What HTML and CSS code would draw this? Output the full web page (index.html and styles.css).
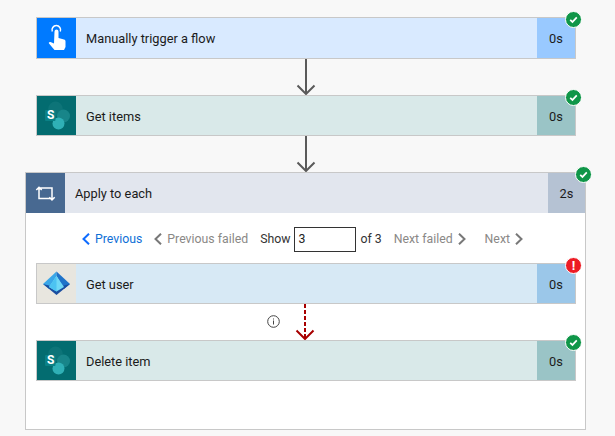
FILE: index.html
```html
<!DOCTYPE html>
<html>
<head>
  <title>Flow run</title>
  <link rel="stylesheet" href="styles.css">
</head>
<body>
  <svg class="sprites">
    <symbol id="sharepoint" viewBox="0 0 39 40">
      <circle cx="18.500" cy="12.800" r="7.300" fill="#0d7478"/>
      <circle cx="26.500" cy="20" r="6.500" fill="#188589"/>
      <circle cx="21.500" cy="27.500" r="6" fill="#2fb0b6"/>
      <rect x="8" y="14" width="10.500" height="11" rx="1" fill="#0a8186"/>
    </symbol>
    <symbol id="check" viewBox="0 0 16 16">
      <path d="M4.500 8.300l2.400 2.300 4.600-4.800" fill="none" stroke="#fff" stroke-width="1.800"/>
    </symbol>
    <symbol id="chev-left" viewBox="0 0 10 12">
      <path d="M8 .7L2.500 6 8 11.300" fill="none" stroke="currentColor" stroke-width="2"/>
    </symbol>
    <symbol id="chev-right" viewBox="0 0 10 12">
      <path d="M2 .7L7.500 6 2 11.300" fill="none" stroke="currentColor" stroke-width="2"/>
    </symbol>
    <symbol id="arrow" viewBox="0 0 20 36">
      <path d="M10 0v35M1.500 26.500L10 35l8.500-8.500" fill="none" stroke="#5a5a5a" stroke-width="2"/>
    </symbol>
  </svg>

  <div class="flow">
    <div class="card card-trigger">
      <div class="card-icon">
        <svg width="39" height="40" viewBox="0 0 39 40">
          <path d="M15.300 13.500a4.300 4.300 0 1 1 8 0" fill="none" stroke="#fff" stroke-width="1.500"/>
          <path d="M17.500 13.500a2 2 0 0 1 4 0v6.500l5.500 1.500c1 .3 1.500 1 1.500 2V29l-1.500 3h-9.500l-5.500-6.500c-.6-.8.300-2 1.500-1.500l3.500 1.500z" fill="#fff"/>
        </svg>
      </div>
      <div class="card-title">Manually trigger a flow</div>
      <div class="card-time">0s</div>
      <span class="badge badge-ok"><svg width="15" height="15"><use href="#check"/></svg></span>
    </div>

    <svg class="connector" width="20" height="36"><use href="#arrow"/></svg>

    <div class="card card-sp">
      <div class="card-icon">
        <svg width="39" height="40"><use href="#sharepoint"/></svg>
        <span class="sp-letter">S</span>
      </div>
      <div class="card-title">Get items</div>
      <div class="card-time">0s</div>
      <span class="badge badge-ok"><svg width="15" height="15"><use href="#check"/></svg></span>
    </div>

    <svg class="connector" width="20" height="36"><use href="#arrow"/></svg>

    <div class="loop">
      <div class="loop-head">
        <div class="card-icon">
          <svg width="39" height="40" viewBox="0 0 39 40" fill="none" stroke="#fff" stroke-width="1.500">
            <path d="M13 14.500V25.500H24M14 15H26V26.500M10.300 17L13 14.300 15.700 17M23.300 24.200L26 26.900l2.700-2.700"/>
          </svg>
        </div>
        <div class="card-title">Apply to each</div>
        <div class="card-time">2s</div>
        <span class="badge badge-ok"><svg width="15" height="15"><use href="#check"/></svg></span>
      </div>

      <div class="pager">
        <span class="pager-link active"><svg width="10" height="12"><use href="#chev-left"/></svg>Previous</span>
        <span class="pager-link prev-failed"><svg width="10" height="12"><use href="#chev-left"/></svg>Previous failed</span>
        <span class="pager-show">Show<input class="pager-input" type="text" value="3">of 3</span>
        <span class="pager-link next-failed">Next failed<svg width="10" height="12"><use href="#chev-right"/></svg></span>
        <span class="pager-link">Next<svg width="10" height="12"><use href="#chev-right"/></svg></span>
      </div>

      <div class="card card-user">
        <div class="card-icon">
          <svg width="39" height="40" viewBox="0 0 39 40">
            <path d="M19.500 7.500L6 20l6 5 7.500-13z" fill="#3aa7e8"/>
            <path d="M19.500 7.500L33 20l-6 5-7.500-13z" fill="#1f73c9"/>
            <path d="M6 20l13.500 11 13.500-11-6 1.500-7.500 5-7.500-5z" fill="#1b4ea0"/>
            <path d="M19.500 12L12 23l7.500 4.500L27 23z" fill="#6fd8f7"/>
            <path d="M19.500 12L12 23l7.500 4.500z" fill="#4cc3f2"/>
          </svg>
        </div>
        <div class="card-title">Get user</div>
        <div class="card-time">0s</div>
        <span class="badge badge-err">!</span>
      </div>

      <div class="connector-failed">
        <svg class="info" width="13" height="13" viewBox="0 0 13 13">
          <circle cx="6.500" cy="6.500" r="5.800" fill="none" stroke="#444" stroke-width="1"/>
          <path d="M6.500 5.500v4M6.500 3.500v1" stroke="#444" stroke-width="1"/>
        </svg>
        <svg width="20" height="36" viewBox="0 0 20 36">
          <path d="M10 0v34" fill="none" stroke="#a80000" stroke-width="2" stroke-dasharray="4 2"/>
          <path d="M1.500 26.500L10 35l8.500-8.500" fill="none" stroke="#a80000" stroke-width="2"/>
        </svg>
      </div>

      <div class="card card-sp">
        <div class="card-icon">
          <svg width="39" height="40"><use href="#sharepoint"/></svg>
          <span class="sp-letter">S</span>
        </div>
        <div class="card-title">Delete item</div>
        <div class="card-time">0s</div>
        <span class="badge badge-ok"><svg width="15" height="15"><use href="#check"/></svg></span>
      </div>
    </div>
  </div>
</body>
</html>
```

FILE: styles.css
```css
html, body {
  margin: 0;
  height: 100%;
  overflow: hidden;
}

body {
  font-family: Roboto, "Open Sans", sans-serif;
  font-size: 12.8px;
  color: #1b1b1b;
  background-color: #f8f8f8;
}

.sprites {
  display: none;
}

.flow {
  display: flex;
  flex-direction: column;
  align-items: flex-start;
  padding: 17px 0 0 25px;
}

.flow > .card {
  margin-left: 11px;
}

.flow > .connector {
  margin-left: 271px;
}

.connector {
  display: block;
}

.card {
  position: relative;
  display: flex;
  width: 540px;
  height: 41px;
  box-sizing: border-box;
  border: 1px solid #c8c8c8;
}

.flow > .card-trigger {
  height: 42px;
}

.card-icon {
  position: relative;
  flex: none;
  display: flex;
  align-items: center;
  justify-content: center;
  width: 39px;
}

.card-icon svg {
  display: block;
}

.card-title {
  flex: 1;
  display: flex;
  align-items: center;
  padding: 1px 0 0 10px;
}

.card-time {
  flex: none;
  display: flex;
  align-items: center;
  justify-content: center;
  width: 38px;
  padding-top: 1px;
}

.card-trigger .card-icon { background-color: #007aff; }
.card-trigger .card-title { background-color: #d9eaff; }
.card-trigger .card-time { background-color: #99c9ff; }

.card-sp .card-icon { background-color: #036c70; }
.card-sp .card-title { background-color: #d9e9e9; }
.card-sp .card-time { background-color: #9ac4c6; }

.card-user .card-icon { background-color: #e8e6df; }
.card-user .card-title { background-color: #d7e9f5; }
.card-user .card-time { background-color: #9bc7e9; }

.sp-letter {
  position: absolute;
  left: 10px;
  top: 12px;
  font-size: 12px;
  font-weight: bold;
  color: #fff;
}

.badge {
  position: absolute;
  top: -7px;
  right: -7px;
  display: flex;
  align-items: center;
  justify-content: center;
  width: 15px;
  height: 15px;
  border: 1px solid #fff;
  border-radius: 50%;
  color: #fff;
}

.badge-ok {
  background-color: #0f9648;
}

.badge-err {
  background-color: #ed1c24;
  font-size: 13px;
  font-weight: bold;
}

.loop {
  width: 561px;
  height: 258px;
  box-sizing: border-box;
  padding-right: 9px;
  border: 1px solid #c8c8c8;
  background-color: #fff;
}

.loop-head {
  position: relative;
  display: flex;
  height: 40px;
  margin-right: -9px;
}

.loop-head .card-icon { background-color: #486991; }
.loop-head .card-title { background-color: #e2e6ee; }
.loop-head .card-time { background-color: #b5c2d3; width: 37px; }

.loop > .card {
  margin-left: 10px;
}

.pager {
  display: flex;
  align-items: center;
  height: 50px;
  box-sizing: border-box;
  padding: 2px 0 0 55px;
  font-size: 12.3px;
  color: #8a8886;
}

.pager-link {
  display: flex;
  align-items: center;
  gap: 4px;
  margin-right: 11px;
}

.prev-failed {
  margin-right: 12px;
}

.next-failed {
  margin-right: 18px;
}

.pager-link svg {
  color: #787878;
}

.pager-link.active {
  color: #0f6fd6;
}

.pager-link.active svg {
  color: #0f6cff;
}

.pager-show {
  display: flex;
  align-items: center;
  margin-right: 12px;
  color: #333;
}

.pager-input {
  width: 62px;
  height: 25px;
  box-sizing: border-box;
  margin: 0 4px 0 4px;
  padding: 0 3px;
  border: 1px solid #333;
  border-radius: 0;
  font: inherit;
  color: #222;
  outline: none;
}

.connector-failed {
  position: relative;
  display: flex;
  height: 36px;
  padding-left: 269px;
}

.info {
  position: absolute;
  left: 241px;
  top: 11px;
}
```
